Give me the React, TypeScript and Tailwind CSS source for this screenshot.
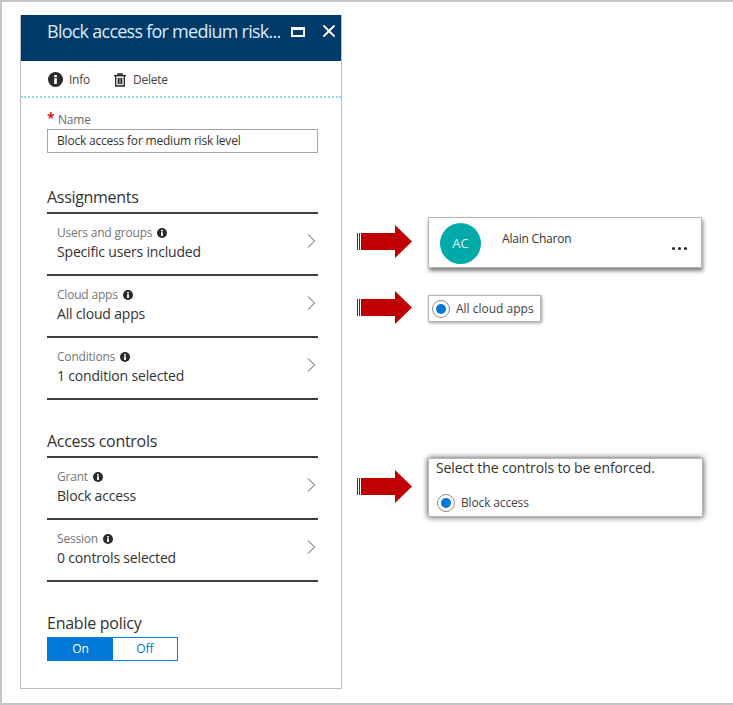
import { X } from 'lucide-react'

function InfoDot({ size = 'h-[10px] w-[10px]' }: { size?: string }) {
  return (
    <svg viewBox="0 0 20 20" className={size}>
      <circle cx="10" cy="10" r="10" fill="#2b2b2b" />
      <rect x="8.2" y="8.4" width="3.6" height="7.6" fill="#fff" />
      <rect x="8.2" y="4" width="3.6" height="3" fill="#fff" />
    </svg>
  )
}

function Row({ label, value }: { label: string; value: string }) {
  return (
    <div className="flex h-[62px] items-center justify-between border-b-2 border-[#3f3f3f] pl-[10px] pr-[2px]">
      <div className="-mt-[3px]">
        <div className="flex h-[19px] items-center gap-[5px] text-[12px] tracking-[-0.2px] text-[#767676]">
          <span>{label}</span>
          <InfoDot />
        </div>
        <div className="h-[20px] text-[14px] leading-[20px] tracking-[-0.18px] text-[#333333]">{value}</div>
      </div>
      <svg viewBox="0 0 9 14" className="-mt-[6px] h-[14px] w-[9px]" fill="none" stroke="#555555" strokeWidth="1">
        <path d="M1 0.500 7.500 7 1 13.500" />
      </svg>
    </div>
  )
}

function Arrow() {
  return (
    <svg viewBox="0 0 55 33" className="h-[33px] w-[55px] shrink-0">
      <path d="M0 8h1v17H0zM2 8h1v17H2zM4 8h34V0l17 16.500L38 33v-8H4z" fill="#c00000" />
    </svg>
  )
}

function Radio() {
  return (
    <span className="flex h-[18px] w-[18px] shrink-0 items-center justify-center rounded-full border border-[#8c8c8c] bg-white">
      <span className="h-[10px] w-[10px] rounded-full bg-[#0078d7]" />
    </span>
  )
}

export default function App() {
  return (
    <div className="flex h-[705px] w-[733px] items-start border-2 border-r-0 border-[#c4c4c4] bg-white font-['Open_Sans','Noto_Sans',sans-serif]">
      <div className="ml-[18px] mt-[13px] h-[674px] w-[322px] border border-t-0 border-[#bdbdbd]">
        <div className="flex h-[46px] items-start bg-[#003a6b] pl-[26px] pt-[4px] text-white">
          <span className="w-[238px] text-[18px] leading-[24px] tracking-[-0.75px] whitespace-nowrap text-[#d8ecf7]">Block access for medium risk...</span>
          <span className="mt-[8px] ml-[6px] h-[10px] w-[14px] border-2 border-t-[3px] border-white" />
          <X className="mt-[2px] ml-[14px] h-[20px] w-[20px]" strokeWidth={2.2} />
        </div>
        <div className="flex h-[37px] items-center gap-[24px] border-b-2 border-dotted border-[#8fdcef] pt-[2px] pl-[27px] text-[12px] tracking-[-0.25px] text-[#444444]">
          <div className="flex items-center gap-[6px]">
            <InfoDot size="h-[15px] w-[15px]" />
            <span>Info</span>
          </div>
          <div className="flex items-center gap-[7px]">
            <svg viewBox="0 0 14 16" className="h-[14px] w-[12px]" fill="none" stroke="#222" strokeWidth="1.5">
              <path d="M0 3h14M4.500 3V1h5v2M2 3v12h10V3M5 5.500V13M7 5.500V13M9 5.500V13" />
            </svg>
            <span>Delete</span>
          </div>
        </div>
        <div className="px-[26px]">
          <div className="mt-[13px] flex h-[18px] items-center text-[12px] tracking-[-0.2px] text-[#6b6b6b]">
            <span className="-mt-[4px] w-[11px] text-[14px] leading-none font-semibold text-[#d40000]">*</span>
            <span>Name</span>
          </div>
          <div className="flex h-[24px] w-[271px] items-center border border-[#a6a6a6] pl-[9px] text-[12px] tracking-[-0.2px] text-[#333333]">
            Block access for medium risk level
          </div>
          <div className="mt-[32px] flex h-[27px] items-center pb-[3px] text-[16px] tracking-[-0.3px] text-[#333333]">Assignments</div>
          <div className="w-[271px] border-t-2 border-[#3f3f3f]">
            <Row label="Users and groups" value="Specific users included" />
            <Row label="Cloud apps" value="All cloud apps" />
            <Row label="Conditions" value="1 condition selected" />
          </div>
          <div className="mt-[29px] flex h-[27px] items-center pb-[3px] text-[16px] tracking-[-0.3px] text-[#333333]">Access controls</div>
          <div className="w-[271px] border-t-2 border-[#3f3f3f]">
            <Row label="Grant" value="Block access" />
            <Row label="Session" value="0 controls selected" />
          </div>
          <div className="mt-[29px] flex h-[26px] items-center pb-[3px] text-[16px] tracking-[-0.25px] text-[#333333]">Enable policy</div>
          <div className="flex h-[24px] w-[131px] border border-[#0078d7] text-[12px]">
            <div className="flex w-[65px] items-center justify-center bg-[#0078d7] text-white">On</div>
            <div className="flex flex-1 items-center justify-center text-[#0078d7]">Off</div>
          </div>
        </div>
      </div>

      <div className="ml-[15px] flex flex-col">
        <div className="mt-[209px] flex items-start">
          <div className="mt-[14px]">
            <Arrow />
          </div>
          <div className="mt-[6px] ml-[16px] flex h-[51px] w-[274px] border border-[#b5b5b5] bg-white pl-[11px] shadow-[1px_3px_4px_rgba(0,0,0,0.5)]">
            <div className="mt-[5px] flex h-[41px] w-[41px] items-center justify-center rounded-full bg-[#00aaa8] text-[13px] text-[#d8f3f2]">AC</div>
            <span className="mt-[13px] ml-[21px] text-[12px] leading-[16px] tracking-[-0.2px] text-[#333333]">Alain Charon</span>
            <span className="mt-[29px] mr-[14px] ml-auto flex gap-[3px]">
              <span className="h-[3px] w-[3px] rounded-full bg-[#222222]" />
              <span className="h-[3px] w-[3px] rounded-full bg-[#222222]" />
              <span className="h-[3px] w-[3px] rounded-full bg-[#222222]" />
            </span>
          </div>
        </div>
        <div className="mt-[23px] flex items-start">
          <Arrow />
          <div className="mt-[4px] ml-[16px] flex h-[27px] w-[113px] items-center gap-[6px] border border-[#b5b5b5] bg-white pl-[3px] text-[12px] text-[#444444] shadow-[1px_1px_3px_rgba(0,0,0,0.4)]">
            <Radio />
            All cloud apps
          </div>
        </div>
        <div className="mt-[134px] flex items-start">
          <div className="mt-[12px]">
            <Arrow />
          </div>
          <div className="ml-[16px] h-[59px] w-[275px] border border-[#b5b5b5] bg-white pl-[7px] shadow-[0_0_6px_rgba(0,0,0,0.75)]">
            <div className="h-[20px] text-[14px] leading-[18px] tracking-[-0.13px] text-[#333333]">Select the controls to be enforced.</div>
            <div className="mt-[15px] flex items-center gap-[6px] pl-[1px] text-[12px] tracking-[-0.15px] text-[#444444]">
              <Radio />
              Block access
            </div>
          </div>
        </div>
      </div>
    </div>
  )
}
